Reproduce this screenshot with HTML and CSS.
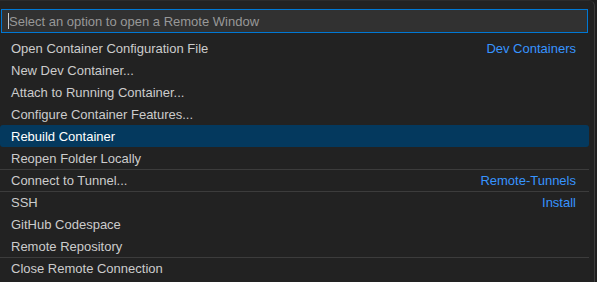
FILE: index.html
```html
<!DOCTYPE html>
<html lang="en">
<head>
  <meta charset="UTF-8">
  <title>Remote Window</title>
  <link rel="stylesheet" href="styles.css">
</head>
<body>
  <div class="picker">
    <div class="header">
      <div class="input"><span class="caret"></span><span class="placeholder">Select an option to open a Remote Window</span></div>
    </div>
    <div class="list">
      <div class="row"><span class="label">Open Container Configuration File</span><span class="group">Dev Containers</span></div>
      <div class="row"><span class="label">New Dev Container...</span></div>
      <div class="row"><span class="label">Attach to Running Container...</span></div>
      <div class="row"><span class="label">Configure Container Features...</span></div>
      <div class="row active"><span class="label">Rebuild Container</span></div>
      <div class="row"><span class="label">Reopen Folder Locally</span></div>
      <div class="row sep"><span class="label">Connect to Tunnel...</span><span class="group">Remote-Tunnels</span></div>
      <div class="row sep"><span class="label">SSH</span><span class="group">Install</span></div>
      <div class="row"><span class="label">GitHub Codespace</span></div>
      <div class="row"><span class="label">Remote Repository</span></div>
      <div class="row sep"><span class="label">Close Remote Connection</span></div>
    </div>
  </div>
</body>
</html>
```

FILE: styles.css
```css
body {
  margin: 0;
  background: #1f1f1f;
  font-family: "Liberation Sans", Arial, sans-serif;
  font-size: 13px;
  color: #cccccc;
  height: 282px;
  overflow: hidden;
}

.picker {
  width: 595px;
  height: 282px;
  background: #222222;
  border-right: 1px solid #3c3c3c;
  border-top: 1px solid #2b2b2b;
  border-top-right-radius: 6px;
  box-sizing: border-box;
}

.header {
  padding: 8px 6px 4px 1px;
}

.input {
  display: flex;
  align-items: center;
  height: 24px;
  box-sizing: border-box;
  border: 1px solid #0078d4;
  background: #313131;
  padding-left: 6px;
}

.caret {
  width: 1px;
  height: 16px;
  background: #cccccc;
}

.placeholder {
  color: #989898;
}

.list {
  padding-right: 5px;
}

.row {
  display: flex;
  align-items: center;
  height: 22px;
  padding: 0 13px 0 11px;
  box-sizing: border-box;
}

.row.sep {
  border-top: 1px solid #3c3c3c;
}

.row.active {
  background: #04395e;
  color: #ffffff;
  border-radius: 3px;
}

.group {
  margin-left: auto;
  color: #3794ff;
}
```
